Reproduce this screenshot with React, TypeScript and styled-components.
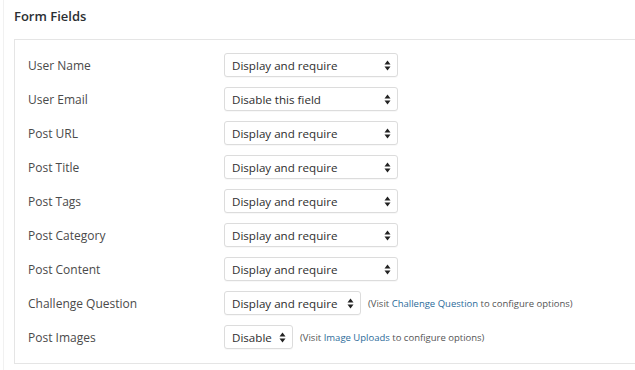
import styled, { createGlobalStyle } from 'styled-components';

const GlobalStyle = createGlobalStyle`
  html, body {
    margin: 0;
    padding: 0;
    background: #ffffff;
    font-family: 'Open Sans', 'Noto Sans', sans-serif;
  }
`;

type Field = {
  label: string;
  value: string;
  width?: number;
  note?: string;
};

const fields: Field[] = [
  { label: 'User Name', value: 'Display and require' },
  { label: 'User Email', value: 'Disable this field' },
  { label: 'Post URL', value: 'Display and require' },
  { label: 'Post Title', value: 'Display and require' },
  { label: 'Post Tags', value: 'Display and require' },
  { label: 'Post Category', value: 'Display and require' },
  { label: 'Post Content', value: 'Display and require' },
  { label: 'Challenge Question', value: 'Display and require', width: 137, note: 'Challenge Question' },
  { label: 'Post Images', value: 'Disable', width: 69, note: 'Image Uploads' },
];

function Arrows() {
  return (
    <svg width="7" height="11" viewBox="0 0 7 11">
      <path d="M3.5 0.5 L6.5 4.5 L0.5 4.5 Z" fill="#222" />
      <path d="M3.5 10.5 L6.5 6.5 L0.5 6.5 Z" fill="#222" />
    </svg>
  );
}

function App() {
  return (
    <>
      <GlobalStyle />
      <Page>
        <Title>Form Fields</Title>
        <Box>
          {fields.map((f) => (
            <Row key={f.label}>
              <Label>{f.label}</Label>
              <Select $width={f.width}>
                <span>{f.value}</span>
                <Arrows />
              </Select>
              {f.note && (
                <Note>
                  (Visit <Link>{f.note}</Link> to configure options)
                </Note>
              )}
            </Row>
          ))}
        </Box>
      </Page>
    </>
  );
}

const Page = styled.div`
  width: 635px;
  height: 370px;
  box-sizing: border-box;
  border-left: 1px solid #f1f1f1;
  margin-left: 3px;
  padding: 6px 0 0 10px;
  overflow: hidden;
`;

const Title = styled.h2`
  margin: 0 0 13px 0;
  font-size: 13px;
  font-weight: 600;
  line-height: 20px;
  color: #2b2f33;
`;

const Box = styled.div`
  width: 700px;
  border: 1px solid #e5e5e5;
  padding: 13px 0 14px 13px;
  display: flex;
  flex-direction: column;
  gap: 10px;
`;

const Row = styled.div`
  display: flex;
  align-items: center;
  height: 24px;
`;

const Label = styled.div`
  width: 196px;
  font-size: 12px;
  color: #4a4a4a;
`;

const Select = styled.div<{ $width?: number }>`
  box-sizing: border-box;
  width: ${({ $width }) => $width ?? 174}px;
  height: 24px;
  border: 1px solid #dcdcdc;
  border-radius: 3px;
  padding: 0 6px 0 7px;
  display: flex;
  align-items: center;
  justify-content: space-between;
  font-size: 11.6px;
  color: #2e2e2e;
  background: #fff;
  box-shadow: 0 1px 1px rgba(0, 0, 0, 0.03);
`;

const Note = styled.div`
  margin-left: 7px;
  font-size: 9.5px;
  color: #555;
`;

const Link = styled.span`
  color: #2c6b9a;
`;

export default App;
